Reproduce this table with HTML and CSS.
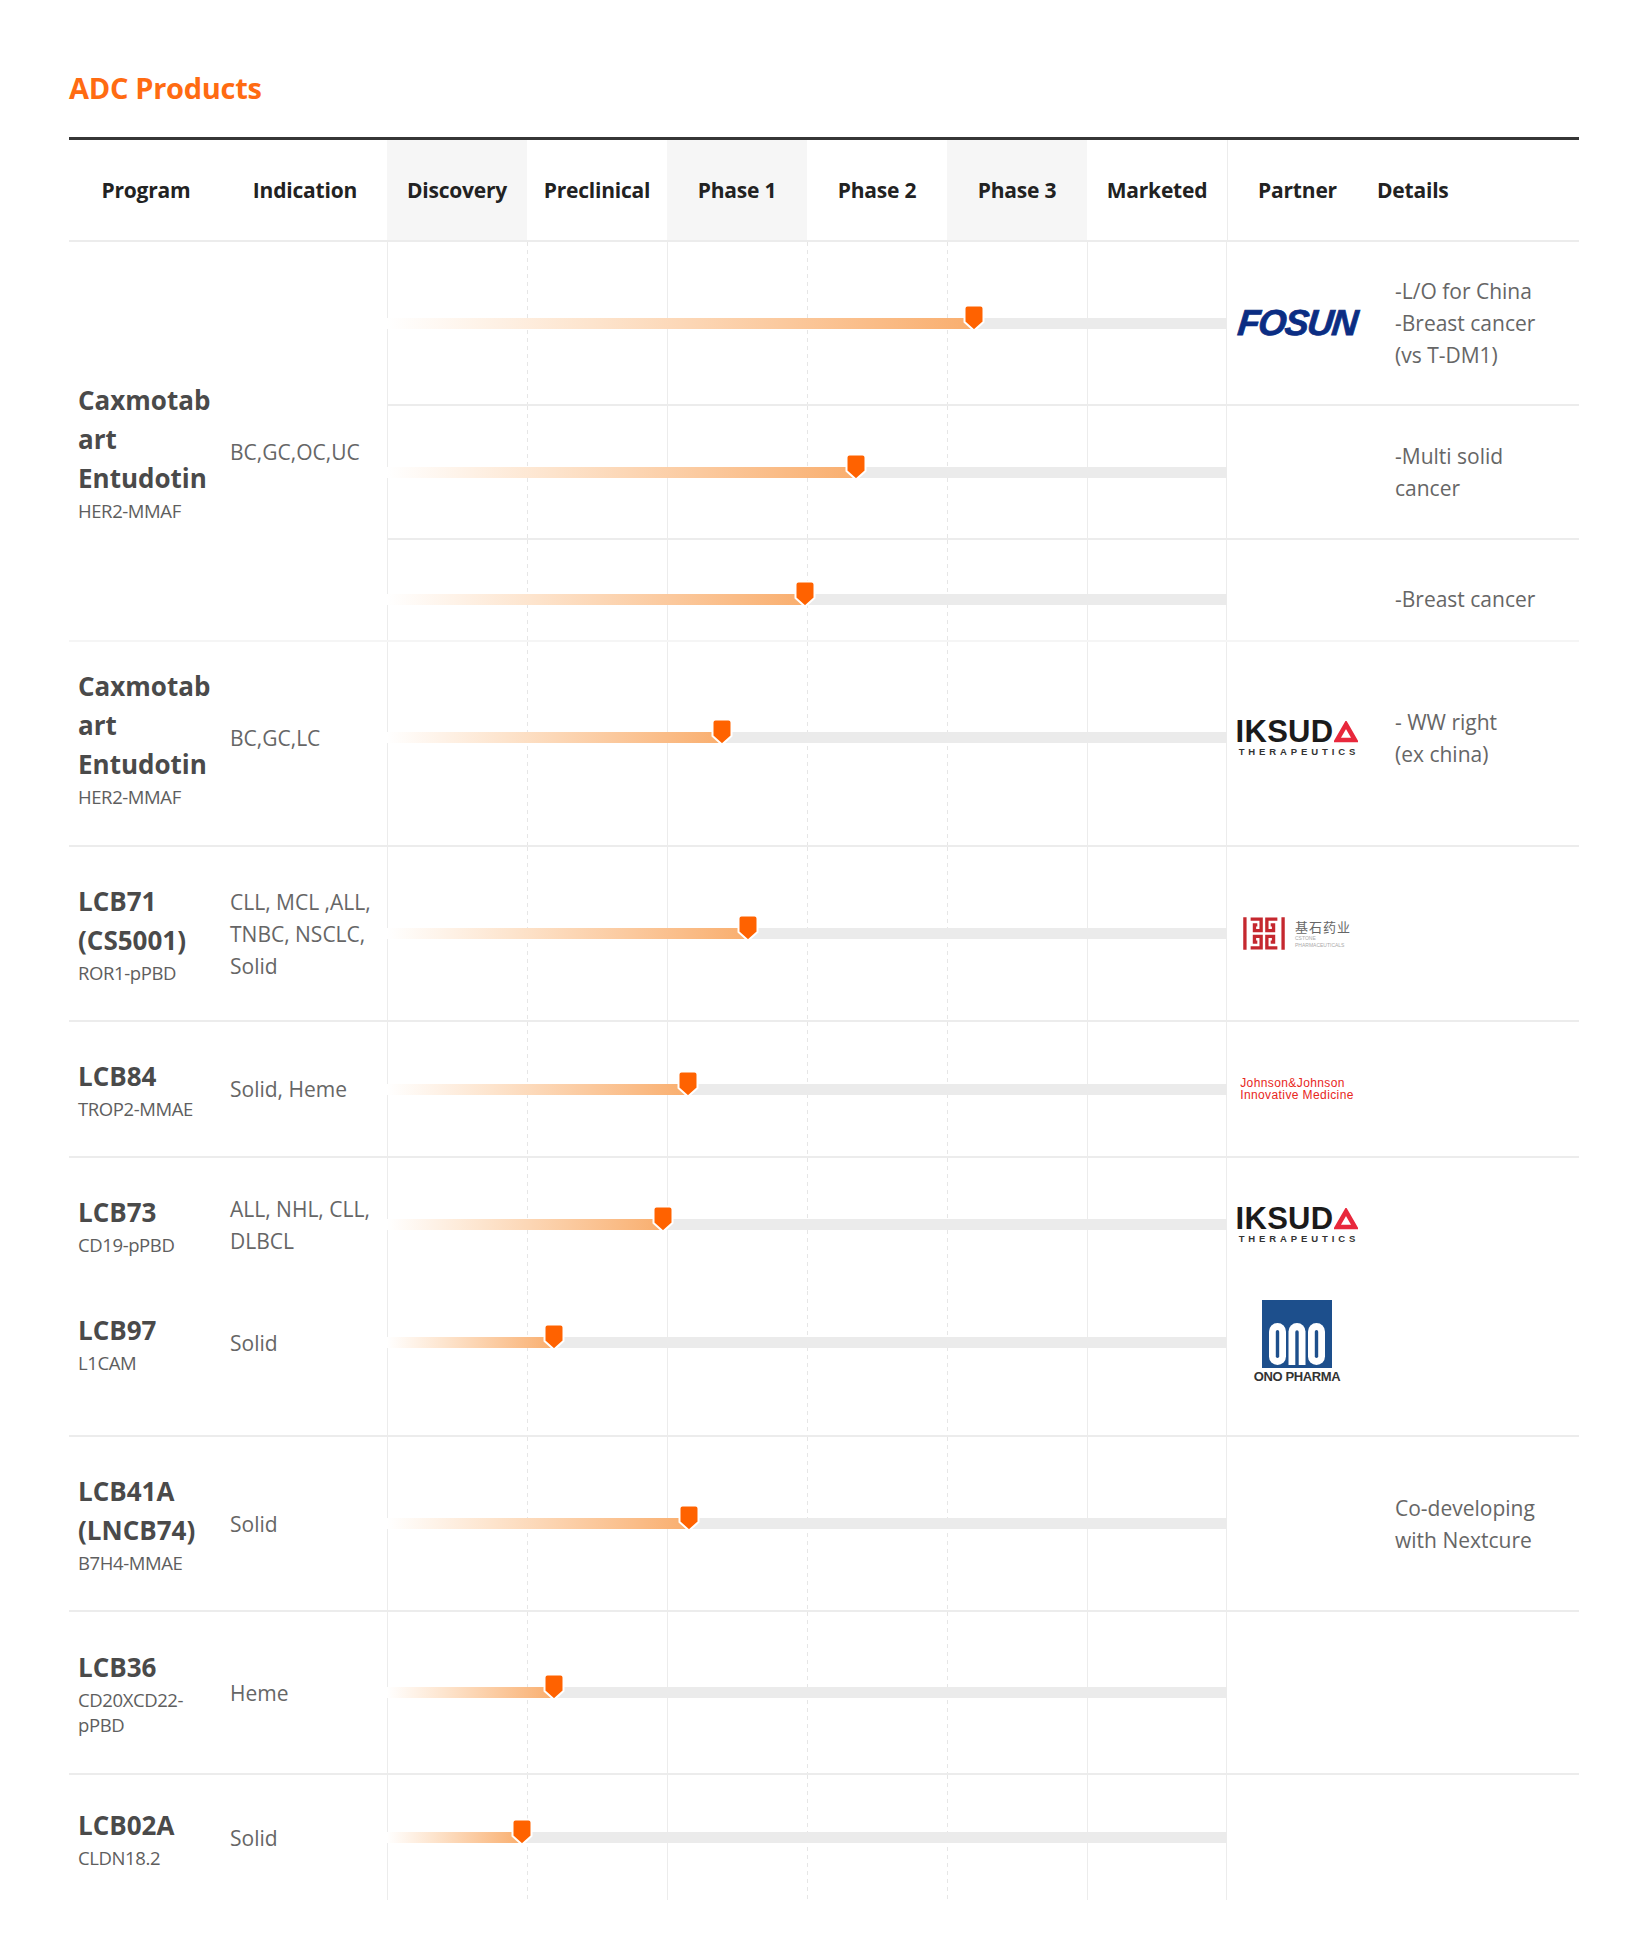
FILE: index.html
```html
<!DOCTYPE html>
<html lang="en">
<head>
<meta charset="utf-8">
<title>ADC Products</title>
<link rel="stylesheet" href="styles.css">
</head>
<body>
<div class="page">
  <h1 class="title">ADC Products</h1>
  <div class="table">
    <div class="head">
      <div class="h">Program</div>
      <div class="h">Indication</div>
      <div class="h shade">Discovery</div>
      <div class="h">Preclinical</div>
      <div class="h shade">Phase 1</div>
      <div class="h">Phase 2</div>
      <div class="h shade">Phase 3</div>
      <div class="h">Marketed</div>
      <div class="h partner-h">Partner</div>
      <div class="h details-h">Details</div>
    </div>

    <!-- Caxmotabart Entudotin (1) -->
    <div class="row g1">
      <div class="prog span3 g1-left"><div class="name">Caxmotab<wbr>art Entudotin</div><div class="target">HER2-MMAF</div></div>
      <div class="ind span3 g1-left">BC,GC,OC,UC</div>
      <div class="stage"><div class="track"><div class="fill" style="width:587px"><svg class="marker" viewBox="0 0 22 28"><path d="M4.5 1.5H17.5Q20.5 1.5 20.5 4.5V18L11 26.5L1.5 18V4.5Q1.5 1.5 4.5 1.5Z"/></svg></div></div></div>
      <div class="partner"><span class="fosun">FOSUN</span></div>
      <div class="details">-L/O for China<br>-Breast cancer<br>(vs T-DM1)</div>

      <div class="stage sub"><div class="track"><div class="fill" style="width:469px"><svg class="marker" viewBox="0 0 22 28"><path d="M4.5 1.5H17.5Q20.5 1.5 20.5 4.5V18L11 26.5L1.5 18V4.5Q1.5 1.5 4.5 1.5Z"/></svg></div></div></div>
      <div class="partner sub"></div>
      <div class="details sub">-Multi solid<br>cancer</div>

      <div class="stage sub sub3"><div class="track"><div class="fill" style="width:418px"><svg class="marker" viewBox="0 0 22 28"><path d="M4.5 1.5H17.5Q20.5 1.5 20.5 4.5V18L11 26.5L1.5 18V4.5Q1.5 1.5 4.5 1.5Z"/></svg></div></div></div>
      <div class="partner sub"></div>
      <div class="details sub sub3">-Breast cancer</div>
    </div>

    <!-- Caxmotabart Entudotin (2) -->
    <div class="row g2">
      <div class="prog"><div class="name">Caxmotab<wbr>art Entudotin</div><div class="target">HER2-MMAF</div></div>
      <div class="ind">BC,GC,LC</div>
      <div class="stage"><div class="track"><div class="fill" style="width:335px"><svg class="marker" viewBox="0 0 22 28"><path d="M4.5 1.5H17.5Q20.5 1.5 20.5 4.5V18L11 26.5L1.5 18V4.5Q1.5 1.5 4.5 1.5Z"/></svg></div></div></div>
      <div class="partner">
        <div class="iksuda"><div class="ik-top"><span class="ik-word">IKSUD</span><svg class="ik-tri" viewBox="0 0 24 22"><path d="M12 3.5L21 19H3Z"/></svg></div><div class="ik-sub">THERAPEUTICS</div></div>
      </div>
      <div class="details">- WW right<br>(ex china)</div>
    </div>

    <!-- LCB71 -->
    <div class="row r-lcb71">
      <div class="prog"><div class="name">LCB71<br>(CS5001)</div><div class="target">ROR1-pPBD</div></div>
      <div class="ind">CLL, MCL ,ALL,<br>TNBC, NSCLC,<br>Solid</div>
      <div class="stage"><div class="track"><div class="fill" style="width:361px"><svg class="marker" viewBox="0 0 22 28"><path d="M4.5 1.5H17.5Q20.5 1.5 20.5 4.5V18L11 26.5L1.5 18V4.5Q1.5 1.5 4.5 1.5Z"/></svg></div></div></div>
      <div class="partner">
        <div class="cstone">
          <svg class="cs-mark" viewBox="0 0 44 36"><path d="M2 1V35M42 1V35M8 3H19V15H12V9H15M36 3H25V15H32V9H29M8 33H19V21H12V27H15M36 33H25V21H32V27H29"/></svg>
          <div class="cs-text"><div class="cs-cn">基石药业</div><div class="cs-en">CSTONE</div><div class="cs-en">PHARMACEUTICALS</div></div>
        </div>
      </div>
      <div class="details"></div>
    </div>

    <!-- LCB84 -->
    <div class="row r-lcb84">
      <div class="prog"><div class="name">LCB84</div><div class="target">TROP2-MMAE</div></div>
      <div class="ind">Solid, Heme</div>
      <div class="stage"><div class="track"><div class="fill" style="width:301px"><svg class="marker" viewBox="0 0 22 28"><path d="M4.5 1.5H17.5Q20.5 1.5 20.5 4.5V18L11 26.5L1.5 18V4.5Q1.5 1.5 4.5 1.5Z"/></svg></div></div></div>
      <div class="partner"><div class="jnj"><div>Johnson&amp;Johnson</div><div>Innovative Medicine</div></div></div>
      <div class="details"></div>
    </div>

    <!-- LCB73 -->
    <div class="row r-lcb73">
      <div class="prog"><div class="name">LCB73</div><div class="target">CD19-pPBD</div></div>
      <div class="ind">ALL, NHL, CLL,<br>DLBCL</div>
      <div class="stage"><div class="track"><div class="fill" style="width:276px"><svg class="marker" viewBox="0 0 22 28"><path d="M4.5 1.5H17.5Q20.5 1.5 20.5 4.5V18L11 26.5L1.5 18V4.5Q1.5 1.5 4.5 1.5Z"/></svg></div></div></div>
      <div class="partner">
        <div class="iksuda"><div class="ik-top"><span class="ik-word">IKSUD</span><svg class="ik-tri" viewBox="0 0 24 22"><path d="M12 3.5L21 19H3Z"/></svg></div><div class="ik-sub">THERAPEUTICS</div></div>
      </div>
      <div class="details"></div>
    </div>

    <!-- LCB97 -->
    <div class="row r-lcb97">
      <div class="prog"><div class="name">LCB97</div><div class="target">L1CAM</div></div>
      <div class="ind">Solid</div>
      <div class="stage"><div class="track"><div class="fill" style="width:167px"><svg class="marker" viewBox="0 0 22 28"><path d="M4.5 1.5H17.5Q20.5 1.5 20.5 4.5V18L11 26.5L1.5 18V4.5Q1.5 1.5 4.5 1.5Z"/></svg></div></div></div>
      <div class="partner">
        <div class="ono">
          <svg class="ono-mark" viewBox="0 0 70 68">
            <rect x="0" y="0" width="70" height="68" fill="#1d4f8c"/>
            <rect x="7" y="23" width="17" height="42" rx="8.5" fill="#fff"/>
            <rect x="13.8" y="30" width="3.4" height="28" rx="1.7" fill="#1d4f8c"/>
            <path d="M26.5 65V31.5A8.5 8.5 0 0 1 43.5 31.5V65Z" fill="#fff"/>
            <path d="M33.3 65V32A1.7 1.7 0 0 1 36.7 32V65Z" fill="#1d4f8c"/>
            <rect x="46" y="23" width="17" height="42" rx="8.5" fill="#fff"/>
            <rect x="52.8" y="30" width="3.4" height="28" rx="1.7" fill="#1d4f8c"/>
          </svg>
          <div class="ono-text">ONO PHARMA</div>
        </div>
      </div>
      <div class="details"></div>
    </div>

    <!-- LCB41A -->
    <div class="row r-lcb41">
      <div class="prog"><div class="name">LCB41A<br>(LNCB74)</div><div class="target">B7H4-MMAE</div></div>
      <div class="ind">Solid</div>
      <div class="stage"><div class="track"><div class="fill" style="width:302px"><svg class="marker" viewBox="0 0 22 28"><path d="M4.5 1.5H17.5Q20.5 1.5 20.5 4.5V18L11 26.5L1.5 18V4.5Q1.5 1.5 4.5 1.5Z"/></svg></div></div></div>
      <div class="partner"></div>
      <div class="details">Co-developing<br>with Nextcure</div>
    </div>

    <!-- LCB36 -->
    <div class="row r-lcb36">
      <div class="prog"><div class="name">LCB36</div><div class="target">CD20XCD22-<br>pPBD</div></div>
      <div class="ind">Heme</div>
      <div class="stage"><div class="track"><div class="fill" style="width:167px"><svg class="marker" viewBox="0 0 22 28"><path d="M4.5 1.5H17.5Q20.5 1.5 20.5 4.5V18L11 26.5L1.5 18V4.5Q1.5 1.5 4.5 1.5Z"/></svg></div></div></div>
      <div class="partner"></div>
      <div class="details"></div>
    </div>

    <!-- LCB02A -->
    <div class="row r-lcb02">
      <div class="prog"><div class="name">LCB02A</div><div class="target">CLDN18.2</div></div>
      <div class="ind">Solid</div>
      <div class="stage"><div class="track"><div class="fill" style="width:135px"><svg class="marker" viewBox="0 0 22 28"><path d="M4.5 1.5H17.5Q20.5 1.5 20.5 4.5V18L11 26.5L1.5 18V4.5Q1.5 1.5 4.5 1.5Z"/></svg></div></div></div>
      <div class="partner"></div>
      <div class="details"></div>
    </div>
  </div>
</div>
</body>
</html>
```

FILE: styles.css
```css
* { box-sizing: border-box; }

html, body {
  margin: 0;
  background: #ffffff;
}

body {
  font-family: "Open Sans", "Noto Sans", "Liberation Sans", sans-serif;
  color: #555;
}

.page {
  padding: 68px 0 37px 69px;
  width: 1652px;
}

.title {
  margin: 0 0 29px;
  font-size: 29px;
  line-height: 40px;
  font-weight: 700;
  color: #ff6b12;
  letter-spacing: -0.3px;
}

.table {
  width: 1510px;
}

/* header */
.head {
  display: grid;
  grid-template-columns: 154px 164px repeat(6, 140px) 140px 212px;
  height: 103px;
  border-top: 3px solid #363636;
}

.h {
  display: flex;
  align-items: center;
  justify-content: center;
  font-size: 21px;
  font-weight: 700;
  color: #222;
  letter-spacing: -0.2px;
}

.h.shade {
  background: #f6f6f6;
}

.partner-h {
  border-left: 1px solid #ececec;
}

.details-h {
  justify-content: flex-start;
  padding-left: 10px;
}

/* body rows */
.row {
  display: grid;
  grid-template-columns: 154px 164px 840px 140px 212px;
  border-top: 2px solid #ececec;
}

.prog {
  display: flex;
  flex-direction: column;
  justify-content: center;
  padding: 0 4px 0 9px;
}

.name {
  font-size: 26px;
  line-height: 39px;
  font-weight: 700;
  color: #4a4a4a;
}

.target {
  font-size: 18.5px;
  line-height: 25px;
  color: #5e5e5e;
  letter-spacing: -0.4px;
}

.ind {
  display: flex;
  align-items: center;
  padding-left: 7px;
  font-size: 21px;
  line-height: 32px;
  color: #666;
}

.stage {
  display: flex;
  align-items: center;
  background-image:
    linear-gradient(#ececec, #ececec),
    repeating-linear-gradient(to bottom, #e6e6e6 0 4px, transparent 4px 8px),
    linear-gradient(#ececec, #ececec),
    repeating-linear-gradient(to bottom, #e6e6e6 0 4px, transparent 4px 8px),
    repeating-linear-gradient(to bottom, #e6e6e6 0 4px, transparent 4px 8px),
    linear-gradient(#ececec, #ececec),
    linear-gradient(#ececec, #ececec);
  background-position: 0 0, 140px 0, 280px 0, 420px 0, 560px 0, 700px 0, 839px 0;
  background-size: 1px 100%;
  background-repeat: no-repeat;
}

.track {
  width: 100%;
  height: 11px;
  background: #ebebeb;
}

.fill {
  position: relative;
  height: 100%;
  background: linear-gradient(90deg, #ffffff 0%, #fde4cd 35%, #f9ae6e 100%);
}

.marker {
  position: absolute;
  right: -11px;
  bottom: -3px;
  width: 22px;
  height: 28px;
}

.marker path {
  fill: #ff6200;
  stroke: #ffffff;
  stroke-width: 2;
  stroke-linejoin: round;
}

.partner {
  display: flex;
  align-items: center;
  justify-content: center;
}

.details {
  display: flex;
  align-items: center;
  padding-left: 28px;
  font-size: 21px;
  line-height: 32px;
  color: #666;
}

/* group 1: three sub rows */
.g1 {
  grid-template-rows: 162px 134px 102px;
}

.span3 {
  grid-row: 1 / 4;
}

.g1-left {
  padding-top: 22px;
}

.sub {
  border-top: 2px solid #ececec;
}

.sub3 {
  padding-top: 18px;
}

.g2 {
  height: 205px;
  border-top-color: #f5f5f5;
}

.g2 > div {
  padding-bottom: 12px;
}

.r-lcb71 { height: 175px; }
.r-lcb84 { height: 136px; }
.r-lcb73 { height: 135px; }

.r-lcb97 {
  height: 144px;
  border-top: none;
}

.r-lcb97 > div {
  padding-bottom: 41px;
}

.r-lcb41 { height: 175px; }
.r-lcb36 { height: 163px; }
.r-lcb02 { height: 127px; }

/* logos */
.fosun {
  font-family: "Liberation Sans", Arial, sans-serif;
  font-style: italic;
  font-weight: 700;
  font-size: 36px;
  line-height: 40px;
  letter-spacing: -1.5px;
  color: #0b2d83;
  -webkit-text-stroke: 0.8px #0b2d83;
  transform: skewX(-6deg);
}

.iksuda {
  display: flex;
  flex-direction: column;
  align-items: center;
  width: 122px;
}

.ik-top {
  display: flex;
  align-items: center;
  height: 28px;
}

.ik-word {
  font-family: "Liberation Sans", Arial, sans-serif;
  font-weight: 700;
  font-size: 31px;
  line-height: 28px;
  color: #1b1b1b;
  letter-spacing: 0.3px;
}

.ik-tri {
  width: 24px;
  height: 22px;
  margin-left: 1px;
}

.ik-tri path {
  fill: none;
  stroke: #e8283c;
  stroke-width: 4.5;
  stroke-linejoin: miter;
}

.ik-sub {
  font-family: "Liberation Sans", Arial, sans-serif;
  font-weight: 700;
  font-size: 9.5px;
  line-height: 12px;
  letter-spacing: 3.9px;
  color: #333;
  margin-right: -4px;
}

.cstone {
  display: flex;
  align-items: center;
  gap: 10px;
}

.cs-mark {
  width: 42px;
  height: 35px;
}

.cs-mark path {
  fill: none;
  stroke: #c5282f;
  stroke-width: 3.5;
}

.cs-text {
  display: flex;
  flex-direction: column;
}

.cs-cn {
  font-family: "Noto Sans CJK SC", "Noto Sans CJK TC", sans-serif;
  font-size: 13px;
  line-height: 16px;
  color: #666;
  letter-spacing: 1px;
}

.cs-en {
  font-family: "Liberation Sans", Arial, sans-serif;
  font-size: 5px;
  line-height: 7px;
  color: #aaa;
}

.jnj {
  font-family: "Liberation Sans", Arial, sans-serif;
  font-size: 12px;
  line-height: 12px;
  color: #e8261c;
  letter-spacing: 0.4px;
}

.ono {
  display: flex;
  flex-direction: column;
  align-items: center;
}

.ono-mark {
  width: 70px;
  height: 68px;
}

.ono-text {
  font-family: "Liberation Sans", Arial, sans-serif;
  font-weight: 700;
  font-size: 13px;
  line-height: 17px;
  letter-spacing: -0.4px;
  color: #333;
}
```
